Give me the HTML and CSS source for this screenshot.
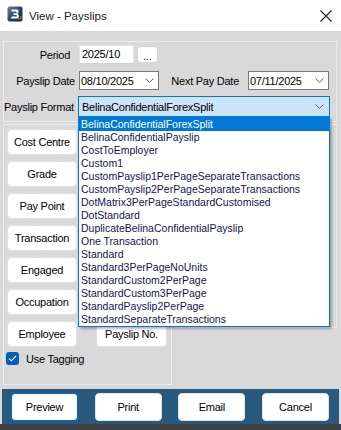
FILE: index.html
```html
<!DOCTYPE html>
<html>
<head>
<meta charset="utf-8">
<title>View - Payslips</title>
<link rel="stylesheet" href="styles.css">
</head>
<body>
<div class="window">
  <div class="titlebar">
    <svg class="app-icon" width="16" height="16" viewBox="0 0 16 16">
      <defs>
        <linearGradient id="ig" x1="0" y1="0" x2="1" y2="1">
          <stop offset="0" stop-color="#6a86a4"/>
          <stop offset="0.5" stop-color="#2e4866"/>
          <stop offset="1" stop-color="#101c2a"/>
        </linearGradient>
      </defs>
      <rect x="0.5" y="0.5" width="15" height="15" rx="2" fill="url(#ig)"/>
      <path d="M5 3.5 H10.5 L11.5 4.8 V6.6 L10.4 7.8 L11.8 9 V11 L10.6 12.5 H3.8 L4.8 10.6 H9.6 L9.9 9.9 L9.5 9 H6.2 L6.8 7.2 H9.4 L9.7 6.4 L9.3 5.5 H4.3 Z" fill="#ffffff"/>
      <path d="M11 12.8 L14 12.8 L14 10" fill="none" stroke="#e0892a" stroke-width="1"/>
    </svg>
    <span class="title">View - Payslips</span>
    <svg class="close" width="12" height="12" viewBox="0 0 12 12">
      <path d="M0.5 0.5 L11.5 11.5 M11.5 0.5 L0.5 11.5" stroke="#1f1f1f" stroke-width="1.1" fill="none"/>
    </svg>
  </div>

  <div class="client">
    <div class="group top-group">
      <div class="row row-period">
        <span class="lbl lbl-period">Period</span>
        <div class="textbox">2025/10</div>
        <div class="btn btn-dots">...</div>
      </div>
      <div class="row row-dates">
        <span class="lbl lbl-paydate">Payslip Date</span>
        <div class="combo combo-date">
          <span class="combo-text">08/10/2025</span>
          <svg class="chev" width="9" height="5" viewBox="0 0 9 5"><path d="M0.5 0.5 L4.5 4.3 L8.5 0.5" fill="none" stroke="#606060" stroke-width="1"/></svg>
        </div>
        <span class="lbl lbl-nextdate">Next Pay Date</span>
        <div class="combo combo-date2">
          <span class="combo-text">07/11/2025</span>
          <svg class="chev" width="9" height="5" viewBox="0 0 9 5"><path d="M0.5 0.5 L4.5 4.3 L8.5 0.5" fill="none" stroke="#606060" stroke-width="1"/></svg>
        </div>
      </div>
      <div class="row row-format">
        <span class="lbl lbl-format">Payslip Format</span>
        <div class="combo combo-format">
          <span class="combo-text">BelinaConfidentialForexSplit</span>
          <svg class="chev" width="9" height="5" viewBox="0 0 9 5"><path d="M0.5 0.5 L4.5 4.3 L8.5 0.5" fill="none" stroke="#606060" stroke-width="1"/></svg>
        </div>
      </div>
    </div>

    <div class="lower">
      <div class="group left-group">
        <div class="btn-grid">
          <div class="btn sort-btn c1 r1">Cost Centre</div>
          <div class="btn sort-btn c1 r2">Grade</div>
          <div class="btn sort-btn c1 r3">Pay Point</div>
          <div class="btn sort-btn c1 r4">Transaction</div>
          <div class="btn sort-btn c1 r5">Engaged</div>
          <div class="btn sort-btn c1 r6">Occupation</div>
          <div class="btn sort-btn c1 r7">Employee</div>
          <div class="btn sort-btn c2 r7">Payslip No.</div>
        </div>
        <div class="check">
          <span class="check-box">
            <svg width="9" height="7" viewBox="0 0 9 7"><path d="M1 3.6 L3.3 5.8 L8 1" fill="none" stroke="#ffffff" stroke-width="1.1"/></svg>
          </span>
          <span class="check-label">Use Tagging</span>
        </div>
      </div>
      <div class="group right-group"></div>
    </div>
  </div>

  <div class="actionbar">
    <div class="btn act-btn focused">Preview</div>
    <div class="btn act-btn">Print</div>
    <div class="btn act-btn">Email</div>
    <div class="btn act-btn">Cancel</div>
  </div>
  <div class="bottom-edge"></div>

  <div class="dropdown-list">
    <div class="item selected">BelinaConfidentialForexSplit</div>
    <div class="item">BelinaConfidentialPayslip</div>
    <div class="item">CostToEmployer</div>
    <div class="item">Custom1</div>
    <div class="item">CustomPayslip1PerPageSeparateTransactions</div>
    <div class="item">CustomPayslip2PerPageSeparateTransactions</div>
    <div class="item">DotMatrix3PerPageStandardCustomised</div>
    <div class="item">DotStandard</div>
    <div class="item">DuplicateBelinaConfidentialPayslip</div>
    <div class="item">One Transaction</div>
    <div class="item">Standard</div>
    <div class="item">Standard3PerPageNoUnits</div>
    <div class="item">StandardCustom2PerPage</div>
    <div class="item">StandardCustom3PerPage</div>
    <div class="item">StandardPayslip2PerPage</div>
    <div class="item">StandardSeparateTransactions</div>
  </div>
</div>
</body>
</html>
```

FILE: styles.css
```css
* { box-sizing: border-box; }

html, body {
  margin: 0;
  padding: 0;
}

body {
  width: 341px;
  height: 430px;
  overflow: hidden;
  background: #d9d9d9;
  font-family: "Liberation Sans", Arial, sans-serif;
  font-size: 11px;
  letter-spacing: -0.25px;
  color: #000;
}

.window {
  position: relative;
  width: 341px;
  height: 430px;
  background: #d9d9d9;
}

/* Title bar */
.titlebar {
  height: 31px;
  background: #ffffff;
  display: flex;
  align-items: center;
  padding-left: 7px;
}

.app-icon {
  flex: none;
  margin-top: -3px;
}

.title {
  font-size: 11.5px;
  letter-spacing: 0;
  margin-left: 6px;
  color: #1a1a1a;
  margin-top: 1px;
}

.close {
  margin-left: auto;
  margin-right: 9px;
}

/* Client area */
.client {
  height: 358px;
  padding-top: 10px;
}

.group {
  border: 1px solid #ececec;
}

.top-group {
  margin-left: 3px;
  width: 334px;
  height: 81px;
  padding-top: 3px;
}

.row {
  display: flex;
  align-items: center;
}

.row-period { height: 19px; }
.row-dates { height: 19px; margin-top: 7px; }
.row-format { height: 21px; margin-top: 6px; }

.lbl {
  flex: none;
  text-align: right;
  white-space: nowrap;
}

.lbl-period { width: 75px; padding-right: 9px; }
.lbl-paydate { width: 75px; padding-right: 4px; }
.lbl-nextdate { width: 89px; padding-right: 9px; }
.lbl-format { width: 74px; padding-right: 5px; }

.textbox {
  width: 55px;
  height: 19px;
  background: #ffffff;
  border: 1px solid #e3e3e3;
  border-bottom-color: #d0d0d0;
  padding-left: 2px;
  line-height: 17px;
}

.btn {
  background: #ffffff;
  border: 1px solid #d3d3d3;
  border-radius: 4px;
  display: flex;
  align-items: center;
  justify-content: center;
  white-space: nowrap;
}

.btn-dots {
  width: 21px;
  height: 17px;
  margin-left: 3px;
  font-size: 10px;
  padding-top: 3px;
  letter-spacing: 0;
}

.combo {
  height: 19px;
  background: #ffffff;
  border: 1px solid #7a7a7a;
  display: flex;
  align-items: center;
  padding-left: 1px;
  padding-right: 4px;
}

.combo-text {
  flex: 1;
  white-space: nowrap;
}

.chev { flex: none; }

.combo-date { width: 80px; }
.combo-date2 { width: 81px; }

.combo-format {
  width: 252px;
  height: 21px;
  background: #cce4f7;
  border-color: #0078d7;
  padding-left: 3px;
  padding-right: 5px;
}

/* Lower area */
.lower {
  display: flex;
  align-items: flex-start;
  margin-top: 2px;
}

.left-group {
  margin-left: 3px;
  width: 169px;
  height: 261px;
  padding: 4px 0 0 3px;
}

.right-group {
  margin-left: 3px;
  width: 162px;
  height: 204px;
}

.btn-grid {
  display: grid;
  grid-template-columns: 70px 71px;
  grid-template-rows: repeat(7, 26px);
  column-gap: 19px;
  row-gap: 6px;
}

.c1 { grid-column: 1; }
.c2 { grid-column: 2; }
.r1 { grid-row: 1; }
.r2 { grid-row: 2; }
.r3 { grid-row: 3; }
.r4 { grid-row: 4; }
.r5 { grid-row: 5; }
.r6 { grid-row: 6; }
.r7 { grid-row: 7; }

.sort-btn {
  border-color: #e0e0e0;
}

.check {
  display: flex;
  align-items: center;
  margin-top: 5px;
  margin-left: -1px;
}

.check-box {
  width: 13px;
  height: 13px;
  border-radius: 3px;
  background: #005fb8;
  display: flex;
  align-items: center;
  justify-content: center;
}

.check-label {
  margin-left: 7px;
}

/* Action bar */
.actionbar {
  margin: 0 2px;
  height: 35px;
  background: #295a7e;
  display: flex;
  gap: 16.67px;
  padding: 4px 0 0 9px;
}

.act-btn {
  width: 67px;
  height: 28px;
  border-color: #e4e4e4;
}

.act-btn.focused {
  border-color: #0067c0;
}

.bottom-edge {
  height: 6px;
  background: #3c4148;
}

/* Dropdown list overlay */
.dropdown-list {
  position: absolute;
  left: 78px;
  top: 117px;
  width: 252px;
  height: 210px;
  background: #ffffff;
  border: 1px solid #0078d7;
  box-shadow: 2px 2px 2px rgba(0, 0, 0, 0.28);
  font-size: 10.5px;
  letter-spacing: 0;
  color: #141450;
}

.item {
  height: 13px;
  line-height: 13px;
  padding-left: 2px;
  white-space: nowrap;
}

.item.selected {
  background: #0078d7;
  color: #ffffff;
}
```
